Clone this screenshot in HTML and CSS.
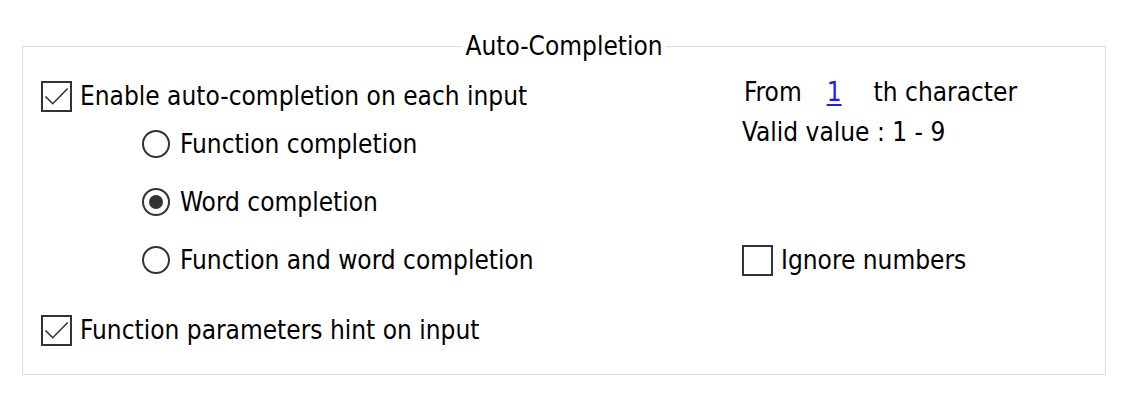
FILE: index.html
```html
<!DOCTYPE html>
<html lang="en">
<head>
    <meta charset="UTF-8">
    <title>Auto-Completion</title>
    <link rel="stylesheet" href="styles.css">
</head>
<body>
    <fieldset class="group">
        <legend>Auto-Completion</legend>
        <div class="columns">
            <div class="col-left">
                <label class="check row-enable">
                    <span class="box checked">
                        <svg viewBox="0 0 27 27" width="27" height="27"><path d="M2.5 13.5 L9.7 20.7 L24.7 5.5" /></svg>
                    </span>
                    Enable auto-completion on each input
                </label>

                <div class="radios">
                    <label class="radio">
                        <span class="ring"></span>
                        Function completion
                    </label>
                    <label class="radio">
                        <span class="ring on"></span>
                        Word completion
                    </label>
                    <label class="radio">
                        <span class="ring"></span>
                        Function and word completion
                    </label>
                </div>

                <label class="check row-hint">
                    <span class="box checked">
                        <svg viewBox="0 0 27 27" width="27" height="27"><path d="M2.5 13.5 L9.7 20.7 L24.7 5.5" /></svg>
                    </span>
                    Function parameters hint on input
                </label>
            </div>

            <div class="col-right">
                <div class="from-row">
                    <span>From</span>
                    <span class="num">1</span>
                    <span>th character</span>
                </div>
                <div class="valid">Valid value : 1 - 9</div>

                <label class="check row-ignore">
                    <span class="box"></span>
                    Ignore numbers
                </label>
            </div>
        </div>
    </fieldset>
</body>
</html>
```

FILE: styles.css
```css
body {
    margin: 0;
    background: #fff;
    color: #000;
    font-family: "DejaVu Sans Condensed", "DejaVu Sans", sans-serif;
    font-size: 26px;
}
.group {
    box-sizing: border-box;
    width: 1084px;
    height: 345px;
    margin: 30px 0 0 22px;
    padding: 0;
    border: 1px solid #dcdcdc;
}
.group legend {
    margin: 0 auto;
    padding: 0 3px;
    line-height: 32px;
}
.columns {
    display: flex;
}
.col-left {
    width: 719px;
    padding: 17px 0 0 18px;
    box-sizing: border-box;
}
.col-right {
    padding-top: 13px;
}
.check,
.radio {
    display: flex;
    align-items: center;
    gap: 8px;
    height: 34px;
    white-space: nowrap;
}
.box {
    box-sizing: border-box;
    width: 31px;
    height: 31px;
    border: 2px solid #333;
    display: flex;
}
.box svg {
    fill: none;
    stroke: #333;
    stroke-width: 1.6;
}
.radios {
    padding-left: 101px;
    padding-top: 14px;
    display: flex;
    flex-direction: column;
    gap: 24px;
}
.ring {
    box-sizing: border-box;
    width: 28px;
    height: 28px;
    border: 2px solid #333;
    border-radius: 50%;
    display: flex;
    align-items: center;
    justify-content: center;
    margin-right: 2px;
}
.ring.on::after {
    content: "";
    width: 14px;
    height: 14px;
    border-radius: 50%;
    background: #333;
}
.row-hint {
    margin-top: 36px;
}
.from-row {
    display: flex;
    align-items: center;
    height: 34px;
    padding-left: 2px;
}
.from-row .num {
    color: #1a1aff;
    text-decoration: underline;
    text-underline-offset: 3px;
    margin: 0 32px 0 25px;
}
.valid {
    height: 34px;
    line-height: 34px;
    margin-top: 6px;
}
.row-ignore {
    margin-top: 94px;
}
```
